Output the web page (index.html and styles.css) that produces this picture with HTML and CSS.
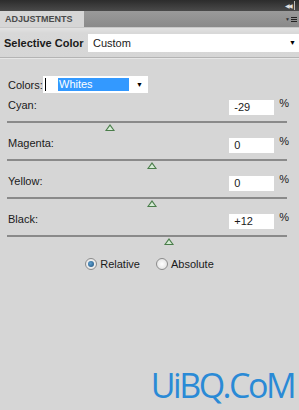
FILE: index.html
```html
<!DOCTYPE html>
<html>

<head>
    <title>Adjustments</title>
    <link rel="stylesheet" href="styles.css">
</head>

<body>
    <!-- Panel title strip -->
    <div class="topbar">
        <span class="collapse">&#9664;&#9664;</span>
        <span class="close-bar"></span>
    </div>

    <!-- Tab row -->
    <div class="tabs">
        <div class="tab">ADJUSTMENTS</div>
        <div class="tab-menu">
            <span class="menu-arrow">&#9660;</span>
            <span class="menu-lines"><i></i><i></i><i></i></span>
        </div>
    </div>

    <!-- Preset header -->
    <div class="header">
        <div class="header-title">Selective Color</div>
        <div class="select preset">
            <span>Custom</span>
            <span class="select-arrow">&#9660;</span>
        </div>
    </div>

    <div class="content">
        <div class="colors-row">
            <label>Colors:</label>
            <div class="select colors">
                <span class="caret"></span>
                <span class="picked">Whites</span>
                <span class="select-arrow">&#9660;</span>
            </div>
        </div>

        <div class="sliders">
            <div class="slider-block">
                <div class="slider-head">
                    <label>Cyan:</label>
                    <div class="value"><span class="value-box">-29</span><span class="pct">%</span></div>
                </div>
                <div class="slider">
                    <div class="track"></div>
                    <div class="thumb" style="left: 35.5%"></div>
                </div>
            </div>

            <div class="slider-block">
                <div class="slider-head">
                    <label>Magenta:</label>
                    <div class="value"><span class="value-box">0</span><span class="pct">%</span></div>
                </div>
                <div class="slider">
                    <div class="track"></div>
                    <div class="thumb" style="left: 50%"></div>
                </div>
            </div>

            <div class="slider-block">
                <div class="slider-head">
                    <label>Yellow:</label>
                    <div class="value"><span class="value-box">0</span><span class="pct">%</span></div>
                </div>
                <div class="slider">
                    <div class="track"></div>
                    <div class="thumb" style="left: 50%"></div>
                </div>
            </div>

            <div class="slider-block">
                <div class="slider-head">
                    <label>Black:</label>
                    <div class="value"><span class="value-box">+12</span><span class="pct">%</span></div>
                </div>
                <div class="slider">
                    <div class="track"></div>
                    <div class="thumb" style="left: 56%"></div>
                </div>
            </div>
        </div>

        <!-- Method -->
        <div class="method">
            <div class="radio-item"><span class="radio checked"></span>Relative</div>
            <div class="radio-item"><span class="radio"></span>Absolute</div>
        </div>
    </div>

    <div class="watermark">UiBQ.CoM</div>
</body>

</html>
```

FILE: styles.css
```css
body {
    margin: 0;
    padding: 0;
    width: 299px;
    height: 410px;
    overflow: hidden;
    background-color: #d6d6d6;
    font-family: "Liberation Sans", Arial, sans-serif;
    font-size: 11px;
    color: #1a1a1a;
    white-space: nowrap;
}

.topbar {
    height: 11px;
    background: linear-gradient(#2c2c2c, #4a4a4a);
    display: flex;
    justify-content: flex-end;
    align-items: center;
    gap: 3px;
    padding-right: 4px;
}

.collapse {
    color: #e0e0e0;
    font-size: 6px;
    letter-spacing: -2px;
}

.close-bar {
    width: 1px;
    height: 9px;
    background-color: #bbb;
}

.tabs {
    height: 16px;
    display: flex;
    background: linear-gradient(#9a9a9a, #8a8a8a);
    border-bottom: 1px solid #c8c8c8;
}

.tab {
    width: 84px;
    background-color: #d6d6d6;
    color: #4a4a4a;
    font-size: 9px;
    font-weight: bold;
    padding-left: 5px;
    line-height: 17px;
    box-sizing: border-box;
}

.tab-menu {
    margin-left: auto;
    display: flex;
    align-items: center;
    gap: 1px;
    padding-right: 2px;
}

.menu-arrow {
    font-size: 5px;
    color: #333;
}

.menu-lines {
    display: flex;
    flex-direction: column;
    gap: 1px;
}

.menu-lines i {
    display: block;
    width: 6px;
    height: 1px;
    background-color: #222;
}

.header {
    height: 29px;
    display: flex;
    align-items: center;
    border-bottom: 1px solid #b4b4b4;
    box-shadow: 0 1px 0 #e6e6e6;
    background: linear-gradient(#e2e2e2 0, #d8d8d8 5px, #d6d6d6 100%);
}

.header-title {
    width: 88px;
    padding-left: 4px;
    box-sizing: border-box;
    font-weight: bold;
    font-size: 11px;
}

.select {
    background-color: #fff;
    display: flex;
    align-items: center;
    position: relative;
}

.select-arrow {
    margin-left: auto;
    font-size: 7px;
    color: #000;
}

.preset {
    flex: 1;
    height: 18px;
    padding-left: 5px;
    padding-right: 3px;
}

.content {
    padding: 0 12px 0 8px;
}

.colors-row {
    display: flex;
    align-items: center;
    margin-top: 18px;
    height: 17px;
}

.colors-row label {
    width: 35px;
}

.colors {
    width: 105px;
    height: 17px;
    box-sizing: border-box;
    padding-right: 5px;
}

.caret {
    width: 1px;
    height: 13px;
    background-color: #000;
    margin-left: 2px;
}

.picked {
    width: 70px;
    margin-left: 12px;
    height: 13px;
    line-height: 13px;
    background-color: #3399ff;
    color: #fff;
    padding-left: 1px;
}

.sliders {
    margin-top: 6px;
}

.slider-block {
    display: flex;
    flex-direction: column;
}

.slider-head {
    display: flex;
    align-items: flex-start;
    height: 22px;
}

.value {
    margin-left: auto;
    display: flex;
    align-items: flex-start;
    margin-top: 1px;
}

.value-box {
    width: 45px;
    height: 15px;
    background-color: #fff;
    box-sizing: border-box;
    padding-left: 5px;
    line-height: 15px;
}

.pct {
    margin-left: 5px;
    margin-top: -3px;
    margin-right: -2px;
}

.slider {
    position: relative;
    height: 16px;
    margin-left: -1px;
    margin-right: -10px;
}

.track {
    height: 2px;
    width: 280px;
    background-color: #8a8a8a;
}

.thumb {
    position: absolute;
    top: 3px;
    width: 0;
    height: 0;
    transform: translateX(-50%);
    border-left: 5px solid transparent;
    border-right: 5px solid transparent;
    border-bottom: 7px solid #4a7d4a;
}

.thumb::after {
    content: "";
    position: absolute;
    left: -3px;
    top: 2px;
    border-left: 3px solid transparent;
    border-right: 3px solid transparent;
    border-bottom: 4px solid #d6ecd6;
}

.method {
    display: flex;
    justify-content: center;
    gap: 16px;
    margin-top: 7px;
    padding-left: 4px;
}

.radio-item {
    display: flex;
    align-items: center;
    gap: 3px;
}

.radio {
    width: 12px;
    height: 12px;
    border-radius: 50%;
    border: 1px solid #8c8c8c;
    background: radial-gradient(#ffffff, #dcdcdc);
    box-sizing: border-box;
    display: flex;
    align-items: center;
    justify-content: center;
}

.radio.checked::after {
    content: "";
    width: 6px;
    height: 6px;
    border-radius: 50%;
    background: radial-gradient(circle at 40% 40%, #5fa0d0, #1d4f7a);
}

.watermark {
    margin-top: 92px;
    text-align: right;
    padding-right: 5px;
    font-family: "Open Sans", "DejaVu Sans", sans-serif;
    font-size: 34px;
    letter-spacing: -2.5px;
    color: #2a8ad6;
    line-height: 46px;
}
```
